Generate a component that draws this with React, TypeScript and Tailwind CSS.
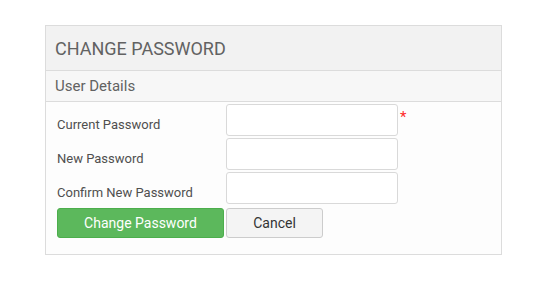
import React from "react";

export default function App() {
  const rows = [
    { label: "Current Password", required: true },
    { label: "New Password", required: false },
    { label: "Confirm New Password", required: false },
  ];
  return (
    <div className="w-[553px] h-[293px] bg-white pt-[25px] pl-[45px]" style={{ fontFamily: "Roboto, 'Liberation Sans', sans-serif" }}>
      <div className="w-[457px] border border-[#dcdcdc] bg-[#fdfdfd]">
        <div className="h-[45px] bg-[#f2f2f2] border-b border-[#dcdcdc] flex items-center pl-[9px] pt-[2px]">
          <span className="text-[18px] text-[#626262] leading-none">CHANGE PASSWORD</span>
        </div>
        <div className="h-[31px] bg-[#f7f7f7] border-b border-[#dcdcdc] flex items-center pl-[9px] pt-[1px]">
          <span className="text-[15px] text-[#626262] leading-none">User Details</span>
        </div>
        <div className="pl-[11px] pt-[2px] pb-[16px] flex flex-col gap-[2px]">
          {rows.map((r) => (
            <div key={r.label} className="flex items-end">
              <label className="w-[169px] text-[13px] leading-[18px] text-[#4f4f4f] pb-[2px]">{r.label}</label>
              <div className="relative">
                <input type="password" className="block w-[172px] h-[32px] border border-[#d9d9d9] rounded-[3px] bg-white outline-none" />
                {r.required && (
                  <span className="absolute left-[174px] top-[6px] text-[15px] leading-none text-[#ff2a2a]">*</span>
                )}
              </div>
            </div>
          ))}
          <div className="flex gap-[2px] mt-[2px]">
            <button className="w-[167px] h-[30px] rounded-[3px] bg-[#5cb85c] border border-[#4cae4c] text-white text-[14px]">Change Password</button>
            <button className="w-[97px] h-[30px] rounded-[3px] bg-[#f4f4f4] border border-[#cccccc] text-[#333333] text-[14px]">Cancel</button>
          </div>
        </div>
      </div>
    </div>
  );
}
